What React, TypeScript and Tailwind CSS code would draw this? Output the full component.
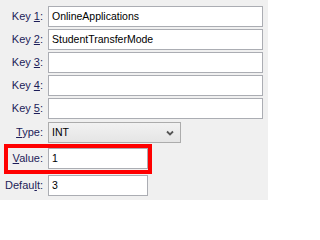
import React from "react";

const font = { fontFamily: '"Liberation Sans", Arial, sans-serif' };

function Label({ before, mnemonic, after, width = "w-[44px]" }: { before: string; mnemonic: string; after: string; width?: string }) {
  return (
    <div className={`${width} shrink-0 text-right text-[11px] text-[#1c1c58] pr-[1px]`}>
      {before}
      <span className="underline underline-offset-[1px] decoration-[1px]">{mnemonic}</span>
      {after}
    </div>
  );
}

function TextBox({ value, width }: { value?: string; width: string }) {
  return (
    <div
      className={`${width} h-[21px] border border-[#abadb3] bg-white flex items-center pl-[3px] text-[10.5px] text-black`}
    >
      {value}
    </div>
  );
}

const keys = [
  { n: "1", value: "OnlineApplications" },
  { n: "2", value: "StudentTransferMode" },
  { n: "3", value: "" },
  { n: "4", value: "" },
  { n: "5", value: "" },
];

export default function App() {
  return (
    <div className="w-[268px] h-[200px] bg-[#f0f0f0] pt-[6px] overflow-hidden" style={font}>
      <div className="flex flex-col gap-[2px]">
        {keys.map((k) => (
          <div key={k.n} className="flex items-center gap-[4px]">
            <Label before="Key " mnemonic={k.n} after=":" />
            <TextBox value={k.value} width="w-[215px]" />
          </div>
        ))}
      </div>

      {/* Type dropdown */}
      <div className="flex items-center gap-[4px] mt-[3px]">
        <Label before="" mnemonic="T" after="ype:" />
        <div className="w-[133px] h-[21px] border border-[#acacac] bg-gradient-to-b from-[#f2f2f2] to-[#e5e5e5] flex items-center justify-between pl-[3px] pr-[6px] text-[10.5px] text-black">
          <span>INT</span>
          <svg width="8" height="6" viewBox="0 0 8 6">
            <path d="M1 1.5 L4 4.5 L7 1.5" fill="none" stroke="#555" strokeWidth="1.8" />
          </svg>
        </div>
      </div>

      {/* Value, highlighted */}
      <div className="ml-[4px] mt-[1px] w-[148px] border-4 border-[#ff0000] flex items-start gap-[4px] h-[30px]">
        <div className="h-[21px] flex items-center">
          <Label before="" mnemonic="V" after="alue:" width="w-[36px]" />
        </div>
        <TextBox value="1" width="w-[100px]" />
      </div>

      <div className="flex items-center gap-[4px] mt-[1px]">
        <Label before="Defau" mnemonic="l" after="t:" />
        <TextBox value="3" width="w-[100px]" />
      </div>
    </div>
  );
}
